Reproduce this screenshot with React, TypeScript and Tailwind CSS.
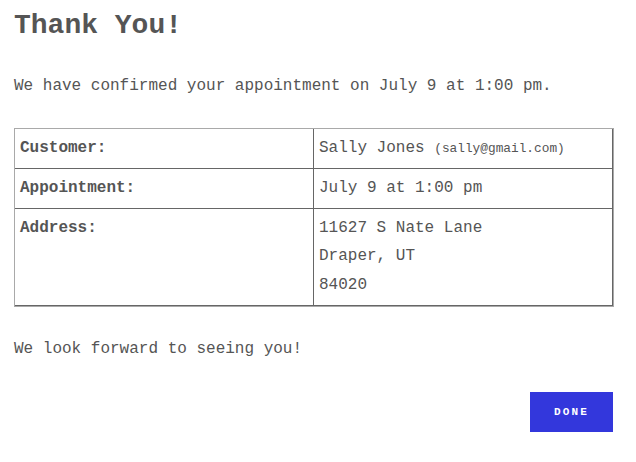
export default function App() {
    const rows = [
        { label: "Customer:", value: <>Sally Jones <span className="text-[12.8px]">(sally@gmail.com)</span></> },
        { label: "Appointment:", value: <>July 9 at 1:00 pm</> },
        {
            label: "Address:",
            value: (
                <>
                    11627 S Nate Lane
                    <br />
                    Draper, UT
                    <br />
                    84020
                </>
            ),
        },
    ];

    return (
        <div className="min-h-[462px] bg-white px-[14px] pt-[10px] text-[#555555] font-['Liberation_Mono',monospace]">
            <h1 className="text-[28px] leading-[32px] font-bold">Thank You!</h1>

            <p className="mt-[32px] text-[16px] leading-[24px]">
                We have confirmed your appointment on July 9 at 1:00 pm.
            </p>

            {/* Details table */}
            <div className="mt-[30px] w-[600px] border border-[#a9a9a9]">
                {rows.map((row) => (
                    <div key={row.label} className="grid grid-cols-2 border-b border-[#666666]">
                        <div className="border-r border-[#666666] p-[5px] text-[16px] leading-[1.8] font-bold">
                            {row.label}
                        </div>
                        <div className="border-r border-[#666666] p-[5px] text-[16px] leading-[1.8]">{row.value}</div>
                    </div>
                ))}
            </div>

            <p className="mt-[30px] text-[16px] leading-[24px]">We look forward to seeing you!</p>

            <div className="mt-[31px] flex w-[599px] justify-end">
                <button className="flex h-[40px] w-[83px] items-center justify-center bg-[#3337dc] text-[11px] font-bold tracking-[2.2px] text-white">
                    DONE
                </button>
            </div>
        </div>
    );
}
